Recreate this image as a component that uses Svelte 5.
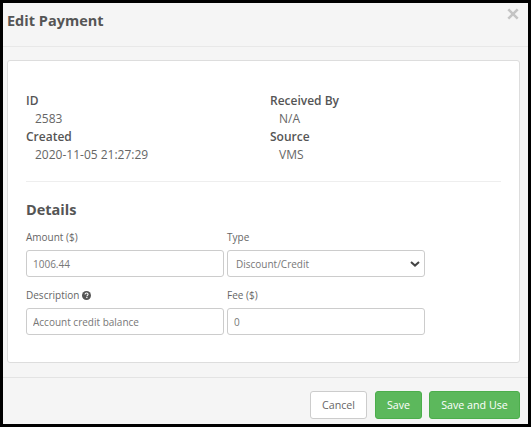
<script lang="ts">
	let amount = $state('1006.44');
	let type = $state('Discount/Credit');
	let description = $state('Account credit balance');
	let fee = $state('0');
</script>

<div class="frame">
	<div class="modal">
		<header class="modal-header">
			<h4>Edit Payment</h4>
			<button class="close" aria-label="Close">
				<svg viewBox="0 0 12 12" width="12" height="12" aria-hidden="true">
					<path d="M2.2 0.4 6 4.2 9.8 0.4 11.6 2.2 7.8 6 11.6 9.8 9.8 11.6 6 7.8 2.2 11.6 0.4 9.8 4.2 6 0.4 2.2z" fill="currentColor" />
				</svg>
			</button>
		</header>

		<div class="modal-body">
			<section class="panel">
				<div class="info">
					<div>
						<strong>ID</strong>
						<p>2583</p>
						<strong>Created</strong>
						<p>2020-11-05 21:27:29</p>
					</div>
					<div>
						<strong>Received By</strong>
						<p>N/A</p>
						<strong>Source</strong>
						<p>VMS</p>
					</div>
				</div>
				<h3>Details</h3>
				<div class="form">
					<label>
						<span>Amount ($)</span>
						<input bind:value={amount} />
					</label>
					<label>
						<span>Type</span>
						<div class="select-wrap">
							<select bind:value={type}>
								<option>Discount/Credit</option>
								<option>Cash</option>
							</select>
							<svg viewBox="0 0 10 6" width="10" height="6" aria-hidden="true">
								<path d="M1 1 5 4.6 9 1" fill="none" stroke="currentColor" stroke-width="2" />
							</svg>
						</div>
					</label>
					<label>
						<span>
							Description
							<svg class="help" viewBox="0 0 16 16" width="9" height="9" aria-hidden="true">
								<circle cx="8" cy="8" r="8" fill="currentColor" />
								<path d="M5.3 6.2C5.4 4.6 6.5 3.7 8.1 3.7 9.7 3.7 10.8 4.6 10.8 5.9 10.8 7.6 8.8 7.7 8.8 9.2" fill="none" stroke="#fff" stroke-width="1.9" />
								<rect x="7.5" y="10.4" width="2.2" height="2.2" fill="#fff" />
							</svg>
						</span>
						<input bind:value={description} />
					</label>
					<label>
						<span>Fee ($)</span>
						<input bind:value={fee} />
					</label>
				</div>
			</section>
		</div>

		<footer class="modal-footer">
			<button class="btn default">Cancel</button>
			<button class="btn success save">Save</button>
			<button class="btn success use">Save and Use</button>
		</footer>
	</div>
</div>

<style>
	:global(body) {
		margin: 0;
		background: #000;
	}

	.frame {
		width: 531px;
		height: 427px;
		box-sizing: border-box;
		padding: 3px;
		background: #000;
		font-family: "Open Sans", sans-serif;
		font-size: 12px;
		color: #555;
	}

	.modal {
		height: 100%;
		display: flex;
		flex-direction: column;
		background: #f5f5f5;
	}

	.modal-header {
		height: 44px;
		box-sizing: border-box;
		display: flex;
		justify-content: space-between;
		align-items: flex-start;
		padding: 9px 9px 0 4px;
		border-bottom: 1px solid #e8e8e8;
	}

	h4 {
		margin: 0;
		font-size: 14.5px;
		line-height: 18px;
		font-weight: 700;
		color: #555;
	}

	.close {
		border: 0;
		padding: 0;
		background: none;
		color: #c4c4c4;
		display: flex;
		margin-top: -4px;
	}

	.modal-body {
		flex: 1;
		padding: 13px 8px 14px 4px;
		border-bottom: 1px solid #e3e3e3;
	}

	.panel {
		height: 100%;
		box-sizing: border-box;
		padding: 31px 18px 0 18px;
		background: #fff;
		border: 1px solid #ddd;
		border-radius: 3px;
	}

	.info {
		display: grid;
		grid-template-columns: 244px 1fr;
		line-height: 18px;
		padding-bottom: 17px;
		border-bottom: 1px solid #eee;
	}

	.info strong {
		display: block;
		font-weight: 600;
		color: #555;
	}

	.info p {
		margin: 0;
		padding-left: 9px;
		color: #666;
	}

	h3 {
		margin: 18px 0 10px;
		font-size: 14.5px;
		line-height: 20px;
		font-weight: 700;
		color: #555;
	}

	.form {
		display: grid;
		grid-template-columns: 198px 198px;
		column-gap: 3px;
		row-gap: 11px;
	}

	label {
		display: block;
		font-size: 10px;
		line-height: 14px;
		color: #666;
	}

	label > span {
		display: block;
		height: 14px;
		margin-bottom: 6px;
	}

	.help {
		vertical-align: -1px;
		color: #555;
	}

	input,
	select {
		width: 100%;
		height: 27px;
		box-sizing: border-box;
		padding: 0 6px;
		display: block;
		font-family: inherit;
		font-size: 10px;
		color: #777;
		background: #fff;
		border: 1px solid #ccc;
		border-radius: 3px;
		appearance: none;
		outline: none;
	}

	select {
		padding-left: 8px;
	}

	.select-wrap {
		position: relative;
	}

	.select-wrap svg {
		position: absolute;
		right: 5px;
		top: 11px;
		color: #444;
		pointer-events: none;
	}

	.modal-footer {
		height: 46px;
		box-sizing: border-box;
		display: flex;
		justify-content: flex-end;
		gap: 7px;
		padding: 13px 8px 0 0;
	}

	.btn {
		height: 28px;
		padding: 0;
		font-family: inherit;
		font-size: 10.7px;
		border-radius: 3px;
		border: 1px solid transparent;
	}

	.default {
		width: 57px;
		margin-right: 1px;
		background: #fff;
		border-color: #ccc;
		color: #666;
	}

	.success {
		background: #5cb85c;
		border-color: #4cae4c;
		color: #fff;
	}

	.save {
		width: 47px;
	}

	.use {
		width: 91px;
	}
</style>
